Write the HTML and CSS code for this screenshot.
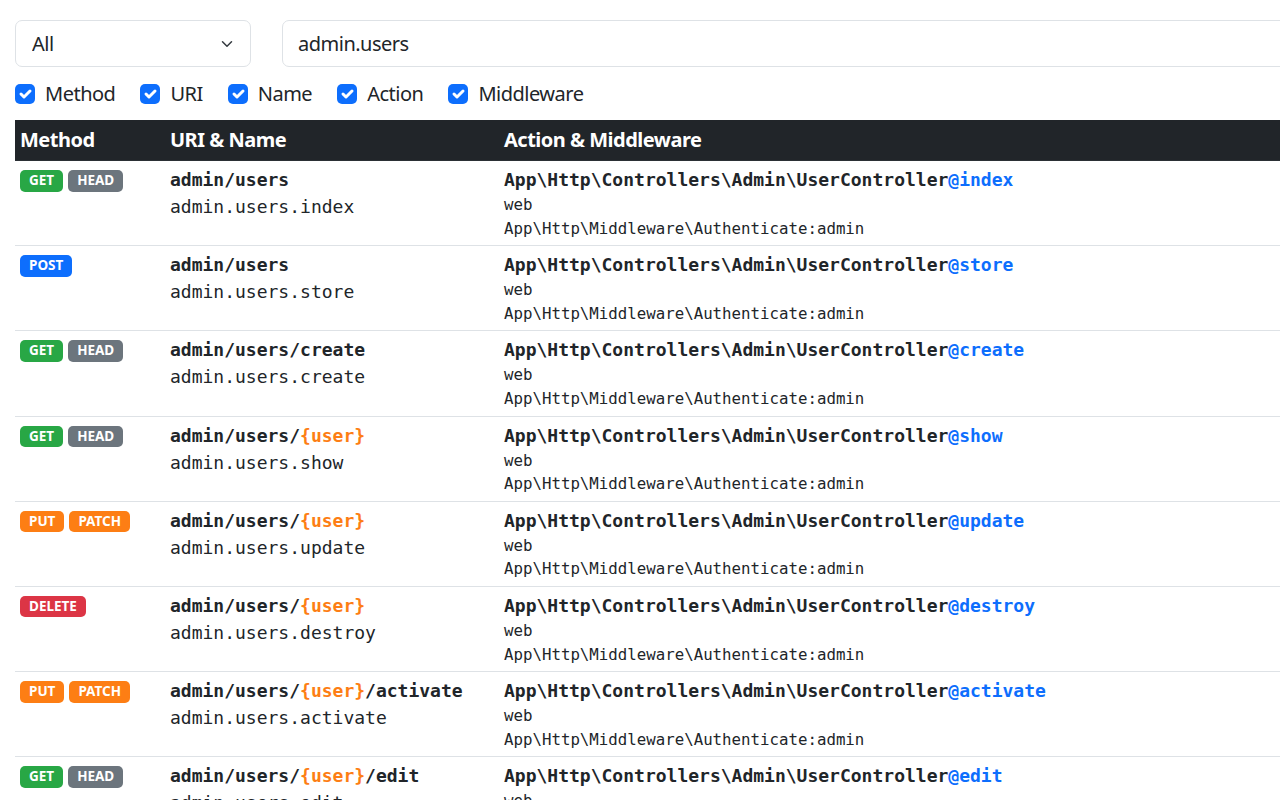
FILE: index.html
```html
<!DOCTYPE html>
<html lang="en">
<head>
<meta charset="utf-8">
<title>Routes</title>
<link rel="stylesheet" href="styles.css">
</head>
<body>
<div class="page">
  <div class="filters">
    <div class="select-wrap">
      <select class="select"><option>All</option></select>
      <svg class="chevron" viewBox="0 0 16 16" width="16" height="12"><path d="m2 5 6 6 6-6" fill="none" stroke="#343a40" stroke-width="2" stroke-linecap="round" stroke-linejoin="round"/></svg>
    </div>
    <input class="search" type="text" value="admin.users">
  </div>
  <div class="checks">
    <label class="check"><span class="box"><svg viewBox="0 0 20 20" width="20" height="20"><path d="m6 10 3 3 6-6" fill="none" stroke="#fff" stroke-width="3" stroke-linecap="round" stroke-linejoin="round"/></svg></span>Method</label>
    <label class="check"><span class="box"><svg viewBox="0 0 20 20" width="20" height="20"><path d="m6 10 3 3 6-6" fill="none" stroke="#fff" stroke-width="3" stroke-linecap="round" stroke-linejoin="round"/></svg></span>URI</label>
    <label class="check"><span class="box"><svg viewBox="0 0 20 20" width="20" height="20"><path d="m6 10 3 3 6-6" fill="none" stroke="#fff" stroke-width="3" stroke-linecap="round" stroke-linejoin="round"/></svg></span>Name</label>
    <label class="check"><span class="box"><svg viewBox="0 0 20 20" width="20" height="20"><path d="m6 10 3 3 6-6" fill="none" stroke="#fff" stroke-width="3" stroke-linecap="round" stroke-linejoin="round"/></svg></span>Action</label>
    <label class="check"><span class="box"><svg viewBox="0 0 20 20" width="20" height="20"><path d="m6 10 3 3 6-6" fill="none" stroke="#fff" stroke-width="3" stroke-linecap="round" stroke-linejoin="round"/></svg></span>Middleware</label>
  </div>
  <table class="routes">
    <thead>
      <tr><th class="c-method">Method</th><th class="c-uri">URI &amp; Name</th><th>Action &amp; Middleware</th></tr>
    </thead>
    <tbody>
      <tr>
        <td><div class="badges"><span class="badge get">GET</span><span class="badge head">HEAD</span></div></td>
        <td><div class="uri">admin/users</div><div class="name">admin.users.index</div></td>
        <td><div class="action">App\Http\Controllers\Admin\UserController<span class="fn">@index</span></div><div class="mw">web</div><div class="mw">App\Http\Middleware\Authenticate:admin</div></td>
      </tr>
      <tr>
        <td><div class="badges"><span class="badge post">POST</span></div></td>
        <td><div class="uri">admin/users</div><div class="name">admin.users.store</div></td>
        <td><div class="action">App\Http\Controllers\Admin\UserController<span class="fn">@store</span></div><div class="mw">web</div><div class="mw">App\Http\Middleware\Authenticate:admin</div></td>
      </tr>
      <tr>
        <td><div class="badges"><span class="badge get">GET</span><span class="badge head">HEAD</span></div></td>
        <td><div class="uri">admin/users/create</div><div class="name">admin.users.create</div></td>
        <td><div class="action">App\Http\Controllers\Admin\UserController<span class="fn">@create</span></div><div class="mw">web</div><div class="mw">App\Http\Middleware\Authenticate:admin</div></td>
      </tr>
      <tr>
        <td><div class="badges"><span class="badge get">GET</span><span class="badge head">HEAD</span></div></td>
        <td><div class="uri">admin/users/<span class="param">{user}</span></div><div class="name">admin.users.show</div></td>
        <td><div class="action">App\Http\Controllers\Admin\UserController<span class="fn">@show</span></div><div class="mw">web</div><div class="mw">App\Http\Middleware\Authenticate:admin</div></td>
      </tr>
      <tr>
        <td><div class="badges"><span class="badge put">PUT</span><span class="badge put">PATCH</span></div></td>
        <td><div class="uri">admin/users/<span class="param">{user}</span></div><div class="name">admin.users.update</div></td>
        <td><div class="action">App\Http\Controllers\Admin\UserController<span class="fn">@update</span></div><div class="mw">web</div><div class="mw">App\Http\Middleware\Authenticate:admin</div></td>
      </tr>
      <tr>
        <td><div class="badges"><span class="badge del">DELETE</span></div></td>
        <td><div class="uri">admin/users/<span class="param">{user}</span></div><div class="name">admin.users.destroy</div></td>
        <td><div class="action">App\Http\Controllers\Admin\UserController<span class="fn">@destroy</span></div><div class="mw">web</div><div class="mw">App\Http\Middleware\Authenticate:admin</div></td>
      </tr>
      <tr>
        <td><div class="badges"><span class="badge put">PUT</span><span class="badge put">PATCH</span></div></td>
        <td><div class="uri">admin/users/<span class="param">{user}</span>/activate</div><div class="name">admin.users.activate</div></td>
        <td><div class="action">App\Http\Controllers\Admin\UserController<span class="fn">@activate</span></div><div class="mw">web</div><div class="mw">App\Http\Middleware\Authenticate:admin</div></td>
      </tr>
      <tr>
        <td><div class="badges"><span class="badge get">GET</span><span class="badge head">HEAD</span></div></td>
        <td><div class="uri">admin/users/<span class="param">{user}</span>/edit</div><div class="name">admin.users.edit</div></td>
        <td><div class="action">App\Http\Controllers\Admin\UserController<span class="fn">@edit</span></div><div class="mw">web</div><div class="mw">App\Http\Middleware\Authenticate:admin</div></td>
      </tr>
    </tbody>
  </table>
</div>
</body>
</html>
```
FILE: styles.css
```css
html {
  font-size: 20px;
  overflow: hidden;
}
body {
  margin: 0;
  font-family: "Noto Sans", "Open Sans", sans-serif;
  font-size: 20px;
  line-height: 1.5;
  letter-spacing: -0.5px;
  color: #212529;
  background: #fff;
}
.page {
  width: 1500px;
  padding: 20px 15px 0 15px;
}
.filters {
  display: flex;
  gap: 31px;
}
.select-wrap {
  position: relative;
  width: 236px;
  flex: none;
}
.select {
  appearance: none;
  -webkit-appearance: none;
  width: 100%;
  height: 47px;
  box-sizing: border-box;
  padding: 0 45px 0 16px;
  font: inherit;
  letter-spacing: -0.5px;
  color: #212529;
  background: #fff;
  border: 1px solid #dee2e6;
  border-radius: 7px;
}
.chevron {
  position: absolute;
  right: 16px;
  top: 18px;
  pointer-events: none;
}
.search {
  flex: 1;
  height: 47px;
  box-sizing: border-box;
  padding: 0 15px;
  font: inherit;
  letter-spacing: -0.5px;
  color: #212529;
  border: 1px solid #dee2e6;
  border-radius: 7px;
  outline: none;
}
.checks {
  display: flex;
  margin-top: 12px;
  height: 30px;
  align-items: center;
}
.check {
  display: flex;
  align-items: center;
  margin-right: 25px;
}
.box {
  width: 20px;
  height: 20px;
  border-radius: 5px;
  background: #0d6efd;
  margin-right: 10px;
  display: flex;
}
.routes {
  margin-top: 11px;
  width: 100%;
  border-collapse: collapse;
}
.routes th {
  background: #212529;
  color: #fff;
  font-weight: 700;
  text-align: left;
  padding: 5px;
  line-height: 30px;
  border-bottom: 1px solid #2b3035;
}
.c-method { width: 140px; }
.c-uri { width: 324px; }
.routes td {
  padding: 5px;
  vertical-align: top;
  border-bottom: 1px solid #dee2e6;
}
.badges {
  display: flex;
  gap: 5px;
  margin-top: 4px;
}
.badge {
  display: inline-block;
  font-size: 13.5px;
  font-weight: 700;
  letter-spacing: 0;
  line-height: 1;
  padding: 4px 9px;
  color: #fff;
  border-radius: 5px;
}
.get { background: #28a745; }
.head { background: #6c757d; }
.post { background: #0d6efd; }
.put { background: #fd7e14; }
.del { background: #dc3545; }
.uri, .name, .action, .mw {
  font-family: "DejaVu Sans Mono", monospace;
  letter-spacing: 0;
  white-space: nowrap;
}
.uri, .action {
  font-size: 18px;
  line-height: 27px;
  font-weight: 700;
}
.name {
  font-size: 18px;
  line-height: 27px;
}
.mw {
  font-size: 15.75px;
  line-height: 23.6px;
}
.fn { color: #0d6efd; }
.param { color: #fd7e14; }
```
